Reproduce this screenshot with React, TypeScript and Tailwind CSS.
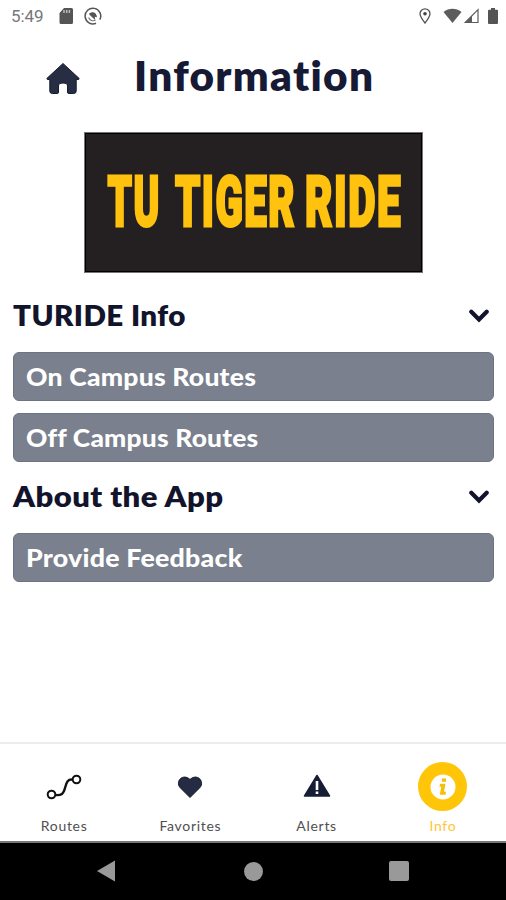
import type { ReactNode } from "react";

function StatusBar() {
  return (
    <div className="flex h-8 shrink-0 items-center pl-[11px] pr-[8px] text-[#5c5c5c]">
      <span className="w-[33px] font-['Roboto',sans-serif] text-[17px] leading-8 tracking-[-0.1px] text-[#777]">5:49</span>
      <svg className="ml-[15px]" width="14" height="16" viewBox="0 0 14 16">
        <path fill="#555" d="M5 0h7.500a1.500 1.500 0 0 1 1.500 1.500v13a1.500 1.500 0 0 1-1.500 1.500h-10.500a1.500 1.500 0 0 1-1.500-1.500V5z" />
        <path d="M5 2v3M7.700 2v3M10.400 2v3" stroke="#bbb" strokeWidth="1.500" />
      </svg>
      <svg className="ml-[11px]" width="18" height="18" viewBox="0 0 18 18" fill="none">
        <path d="M12 16.200A7.800 7.800 0 1 1 15.800 12.700" stroke="#555" strokeWidth="1.500" />
        <path d="M4.600 10.500A4.700 4.700 0 0 0 11.500 13" stroke="#777" strokeWidth="1.100" />
        <path d="M4.800 6.800C8 3.800 12.800 5 13 10.300L10.800 9.700l.4 3.300L6.500 8.700z" fill="#555" />
      </svg>
      <div className="grow" />
      <svg width="12" height="16" viewBox="0 0 12 16" fill="none">
        <path d="M6 15C3 11.200 1 8.500 1 5.800a5 5 0 0 1 10 0C11 8.500 9 11.200 6 15z" stroke="#555" strokeWidth="1.300" />
        <circle cx="6" cy="5.800" r="1.800" fill="#444" />
      </svg>
      <svg className="ml-[12px]" width="19" height="16" viewBox="0 0 19 16">
        <path fill="#5c5c5c" d="M0.500 4C6-.2 13-.2 18.500 4L9.500 15z" />
      </svg>
      <svg className="ml-[2px]" width="15" height="16" viewBox="0 0 15 16">
        <path d="M1.200 14.500L14 1.600v12.900z" fill="none" stroke="#5c5c5c" strokeWidth="1.200" />
        <path fill="#5c5c5c" d="M1 15L8 7.700V15z" />
      </svg>
      <svg className="ml-[9px]" width="10" height="16" viewBox="0 0 10 16">
        <path fill="#555" d="M3 0h4v1.800h2a1 1 0 0 1 1 1V15a1 1 0 0 1-1 1H1a1 1 0 0 1-1-1V2.800a1 1 0 0 1 1-1h2z" />
      </svg>
    </div>
  );
}

function Header() {
  return (
    <header className="flex h-[100px] shrink-0 pl-[46px]">
      <svg className="mt-[30px]" width="34" height="33" viewBox="0 0 34 33">
        <path fill="#272d43" stroke="#171b31" strokeWidth="1" strokeLinejoin="round" d="M17 1.500L1 16.300q-.5 1 .5 1.200h2.300v11.500q0 2.500 2.500 2.500h5q1.200 0 1.200-1.500v-6q0-3 4.500-3t4.500 3v6q0 1.500 1.200 1.500h5q2.500 0 2.500-2.500V17.500h2.300q1-.2.5-1.200z" />
      </svg>
      <h1 className="ml-[54px] mt-[19px] origin-left scale-x-[1.03] whitespace-nowrap font-['Lato',sans-serif] text-[41px] font-extrabold leading-[50px] tracking-[1.3px] text-[#171a34]">Information</h1>
    </header>
  );
}

function Banner() {
  return (
    <div className="ml-[84px] h-[141px] w-[339px] shrink-0 border border-[#77737a] bg-[#242021]">
      <div className="h-full border border-black">
        <svg width="335" height="137" viewBox="86 134 335 137" fill="#ffc20e" stroke="#ffc20e" strokeWidth="2.400" className="font-['Roboto',sans-serif] text-[70px] font-black tracking-[2.500px]">
          <text transform="translate(107.500 226) scale(0.555 1)" vectorEffect="non-scaling-stroke">TU</text>
          <text transform="translate(175 226) scale(0.575 1)" vectorEffect="non-scaling-stroke">TIGER</text>
          <text transform="translate(305 226) scale(0.602 1)" vectorEffect="non-scaling-stroke">RIDE</text>
        </svg>
      </div>
    </div>
  );
}

function SectionTitle({ children, scale }: { children: ReactNode; scale: string }) {
  return (
    <div className="flex h-[60px] items-center justify-between pr-[5px]">
      <h2 className={`-mt-[2px] origin-left whitespace-nowrap font-['Lato',sans-serif] text-[29px] font-extrabold leading-[60px] tracking-[0.4px] text-[#12142c] ${scale}`}>{children}</h2>
      <svg width="20" height="14" viewBox="0 0 20 14" fill="none">
        <path d="M2.300 2.800L10 10.500l7.700-7.700" stroke="#12142c" strokeWidth="4.200" strokeLinecap="round" />
      </svg>
    </div>
  );
}

function LinkButton({ children, scale }: { children: ReactNode; scale: string }) {
  return (
    <button className="block h-[49px] w-full rounded-[6px] border border-[#6c7382] bg-[#7a808d] pl-[12.500px] text-left font-['Lato',sans-serif] text-[25.500px] font-black leading-[47px] tracking-[0.2px] text-white">
      <span className={`inline-block origin-left ${scale}`}>{children}</span>
    </button>
  );
}

function Tab({ label, active, children }: { label: string; active?: boolean; children: ReactNode }) {
  return (
    <div className="flex flex-1 flex-col items-center pt-[18px]">
      <div className={`flex size-[49px] items-center justify-center rounded-full ${active ? "bg-[#ffc609]" : ""}`}>{children}</div>
      <span className={`mt-[5px] font-['Lato',sans-serif] text-[14px] leading-[20px] tracking-[0.7px] ${active ? "text-[#ffc535]" : "text-[#505050]"}`}>{label}</span>
    </div>
  );
}

export default function App() {
  return (
    <div className="flex h-[900px] w-[506px] flex-col overflow-hidden bg-white">
      <StatusBar />
      <Header />
      <Banner />
      <main className="flex grow flex-col pl-[12.500px] pr-[12px] pt-[13px]">
        <SectionTitle scale="scale-x-[1.02]">TURIDE Info</SectionTitle>
        <div className="mt-[6px] flex flex-col gap-[12px]">
          <LinkButton scale="scale-x-[1.04]">On Campus Routes</LinkButton>
          <LinkButton scale="scale-x-[1.033]">Off Campus Routes</LinkButton>
        </div>
        <div className="mt-[5px]">
          <SectionTitle scale="scale-x-[1.07]">About the App</SectionTitle>
        </div>
        <div className="mt-[6px]">
          <LinkButton scale="scale-x-[1.05]">Provide Feedback</LinkButton>
        </div>
      </main>
      <nav className="flex h-[99px] shrink-0 border-t-2 border-[#ededed] pl-px">
        <Tab label="Routes">
          <svg width="36" height="28" viewBox="0 0 36 28" fill="none" stroke="#111" strokeWidth="2">
            <circle cx="5.500" cy="21.500" r="3.800" />
            <circle cx="30.500" cy="6.500" r="3.800" />
            <path strokeWidth="2.400" d="M9.500 22c6 .5 8-1 9.500-7s3-9 7.500-8.500" />
          </svg>
        </Tab>
        <Tab label="Favorites">
          <svg width="26" height="24" viewBox="0 0 26 24">
            <path fill="#252b42" stroke="#12162b" strokeWidth="1" d="M13 22.500L3 12.500C-2 6 6-2 13 4.500 20-2 28 6 23 12.500z" />
          </svg>
        </Tab>
        <Tab label="Alerts">
          <svg className="-translate-y-px" width="28" height="24" viewBox="0 0 28 24">
            <path fill="#181d36" stroke="#181d36" strokeWidth="1.500" strokeLinejoin="round" d="M14 1.500L26.500 22h-25z" />
            <path stroke="#fff" strokeWidth="2.600" d="M14 7v9M14 17.500v2.600" />
          </svg>
        </Tab>
        <Tab label="Info" active>
          <svg width="26" height="26" viewBox="0 0 26 26">
            <circle cx="13" cy="13" r="12.500" fill="#fff" />
            <path fill="#f9bd05" d="M12 4.500h4v3.300h-4zM10 9.800h5.500l-1.500 8h2l-.5 3H9.800l1.500-8H9.500z" />
          </svg>
        </Tab>
      </nav>
      <div className="flex h-[59px] shrink-0 items-center justify-between border-t-2 border-[#777] bg-black pb-px pl-[97px] pr-[97px]">
        <svg width="18" height="22" viewBox="0 0 18 22"><path fill="#999" d="M0 11L18 .5v21z" /></svg>
        <div className="ml-[2px] size-[19px] rounded-full bg-[#999]" />
        <div className="size-[20px] rounded-[2px] bg-[#999]" />
      </div>
    </div>
  );
}
